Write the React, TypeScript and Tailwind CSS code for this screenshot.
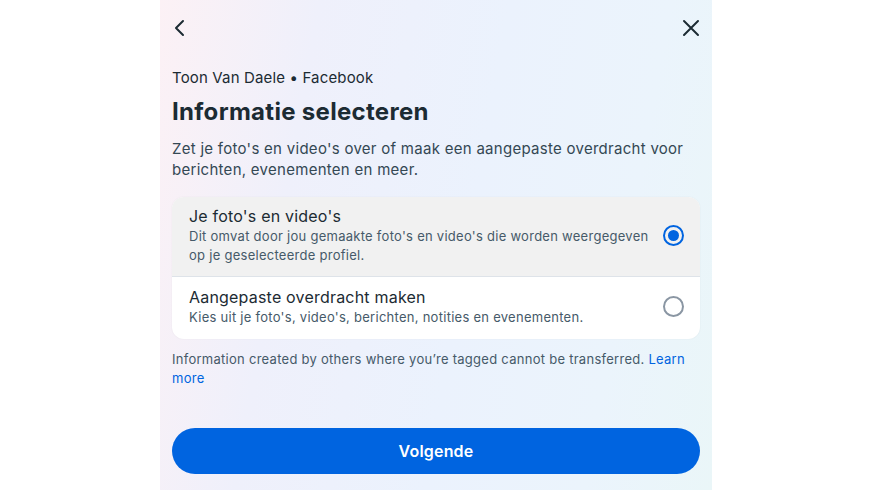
import React from "react";

export default function App() {
  return (
    <div className="w-[871px] h-[490px] bg-white flex justify-center" style={{ fontFamily: "Inter, 'Noto Sans', sans-serif" }}>
      <div className="w-[552px] h-[490px] ml-[1px] bg-[linear-gradient(100deg,#fcf1f5_0%,#eff0fb_25%,#ebf2fd_55%,#ebf4fc_80%,#eaf6f8_100%)] flex flex-col px-3">
        <div className="h-[56px] flex items-center justify-between">
          <svg width="24" height="24" viewBox="0 0 24 24" className="ml-[-3px]" fill="none" stroke="#1c2b33" strokeWidth="2" strokeLinecap="round" strokeLinejoin="round">
            <path d="M14 5l-7 7 7 7" />
          </svg>
          <svg width="24" height="24" viewBox="0 0 24 24" className="mr-[-3px]" fill="none" stroke="#1c2b33" strokeWidth="2" strokeLinecap="round">
            <path d="M5 5l14 14M19 5L5 19" />
          </svg>
        </div>
        <div className="mt-[12px] text-[15px] leading-[20px] tracking-[0.15px] text-[#1c2b33]">Toon Van Daele • Facebook</div>
        <div className="mt-[7px] text-[24px] leading-[34px] font-bold tracking-[0.3px] text-[#1c2b33]">Informatie selecteren</div>
        <div className="mt-[9px] text-[15px] leading-[21px] tracking-[0.28px] text-[#344854]">
          Zet je foto's en video's over of maak een aangepaste overdracht voor berichten, evenementen en meer.
        </div>
        <div className="mt-[17px] rounded-[12px] bg-white overflow-hidden shadow-[0_0_2px_rgba(0,0,0,0.06)]">
          <div className="bg-[#f1f1f1] flex items-center pl-[17px] pr-[15px] pt-[8px] pb-[11px] border-b border-[#dee3e9]">
            <div className="flex-1">
              <div className="text-[16px] leading-[22px] tracking-[0.2px] text-[#1c2b33]">Je foto's en video's</div>
              <div className="text-[13px] leading-[19px] tracking-[0.27px] text-[#465a69]">
                Dit omvat door jou gemaakte foto's en video's die worden weergegeven<br />op je geselecteerde profiel.
              </div>
            </div>
            <div className="w-[21px] h-[21px] mr-[1px] rounded-full border-[2px] border-[#0064e0] flex items-center justify-center">
              <div className="w-[11px] h-[11px] rounded-full bg-[#0064e0]" />
            </div>
          </div>
          <div className="flex items-center pl-[17px] pr-[15px] pt-[9px] pb-[12px]">
            <div className="flex-1">
              <div className="text-[16px] leading-[22px] tracking-[0.2px] text-[#1c2b33]">Aangepaste overdracht maken</div>
              <div className="text-[13px] leading-[19px] tracking-[0.27px] text-[#465a69]">Kies uit je foto's, video's, berichten, notities en evenementen.</div>
            </div>
            <div className="w-[21px] h-[21px] mr-[1px] rounded-full border-[2px] border-[#8a96a3]" />
          </div>
        </div>
        <div className="mt-[11px] text-[13px] leading-[19px] tracking-[0.27px] text-[#465a69]">
          Information created by others where you’re tagged cannot be transferred. <span className="text-[#0064e0]">Learn more</span>
        </div>
        <div className="mt-auto mb-[16px]">
          <button className="w-full h-[46px] rounded-full bg-[#0064e0] text-white text-[16px] font-semibold tracking-[0.2px]">Volgende</button>
        </div>
      </div>
    </div>
  );
}
